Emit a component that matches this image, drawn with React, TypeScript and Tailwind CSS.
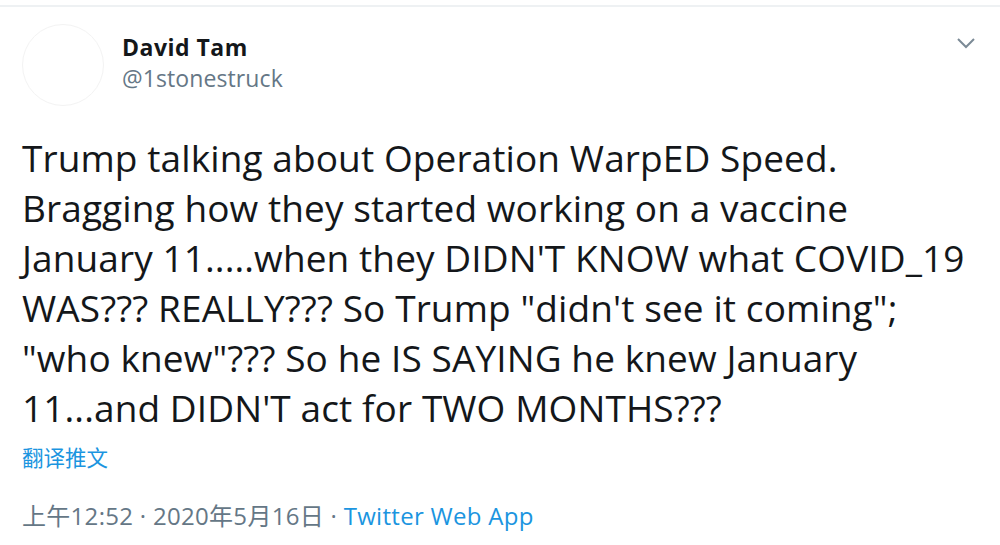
import React from "react";

const lines = [
  "Trump talking about Operation WarpED Speed.",
  "Bragging how they started working on a vaccine",
  "January 11.....when they DIDN'T KNOW what COVID_19",
  "WAS??? REALLY??? So Trump \"didn't see it coming\";",
  "\"who knew\"??? So he IS SAYING he knew January",
  "11...and DIDN'T act for TWO MONTHS???",
];

export default function App() {
  return (
    <div
      className="w-[1000px] h-[545px] bg-white overflow-hidden text-[#14171a]"
      style={{ fontFamily: '"Open Sans", "Noto Sans CJK SC", sans-serif' }}
    >
      <div className="h-[5px]" />
      <div className="border-t-2 border-[#eef1f3]">
        {/* Header */}
        <div className="flex items-start pl-[22px] pr-[24px] pt-[17px]">
          <div className="w-[82px] h-[82px] rounded-full border border-[#f3f3f3] shrink-0" />
          <div className="ml-[18px] pt-[8px] flex flex-col">
            <span className="text-[23px] font-bold leading-[31px] tracking-[0.5px]">David Tam</span>
            <span className="text-[23px] leading-[31px] text-[#657786] tracking-[0.1px]">@1stonestruck</span>
          </div>
          <div className="ml-auto pt-[13px]">
            <svg width="20" height="12" viewBox="0 0 20 12" fill="none">
              <path d="M2 2l8 8 8-8" stroke="#7b8a96" strokeWidth="2" />
            </svg>
          </div>
        </div>

        {/* Body */}
        <div className="pl-[22px] mt-[27px] text-[37px] leading-[50px] whitespace-nowrap tracking-[0.1px]">
          {lines.map((l) => (
            <div key={l}>{l}</div>
          ))}
        </div>

        <div className="pl-[22px] mt-[10px] text-[21.5px] leading-[30px] text-[#1b95e0]">翻译推文</div>

        <div className="pl-[22px] mt-[27px] text-[24px] leading-[32px] text-[#657786] tracking-[0.3px]">
          上午12:52 · 2020年5月16日 · <span className="text-[#1b95e0]">Twitter Web App</span>
        </div>
      </div>
    </div>
  );
}
